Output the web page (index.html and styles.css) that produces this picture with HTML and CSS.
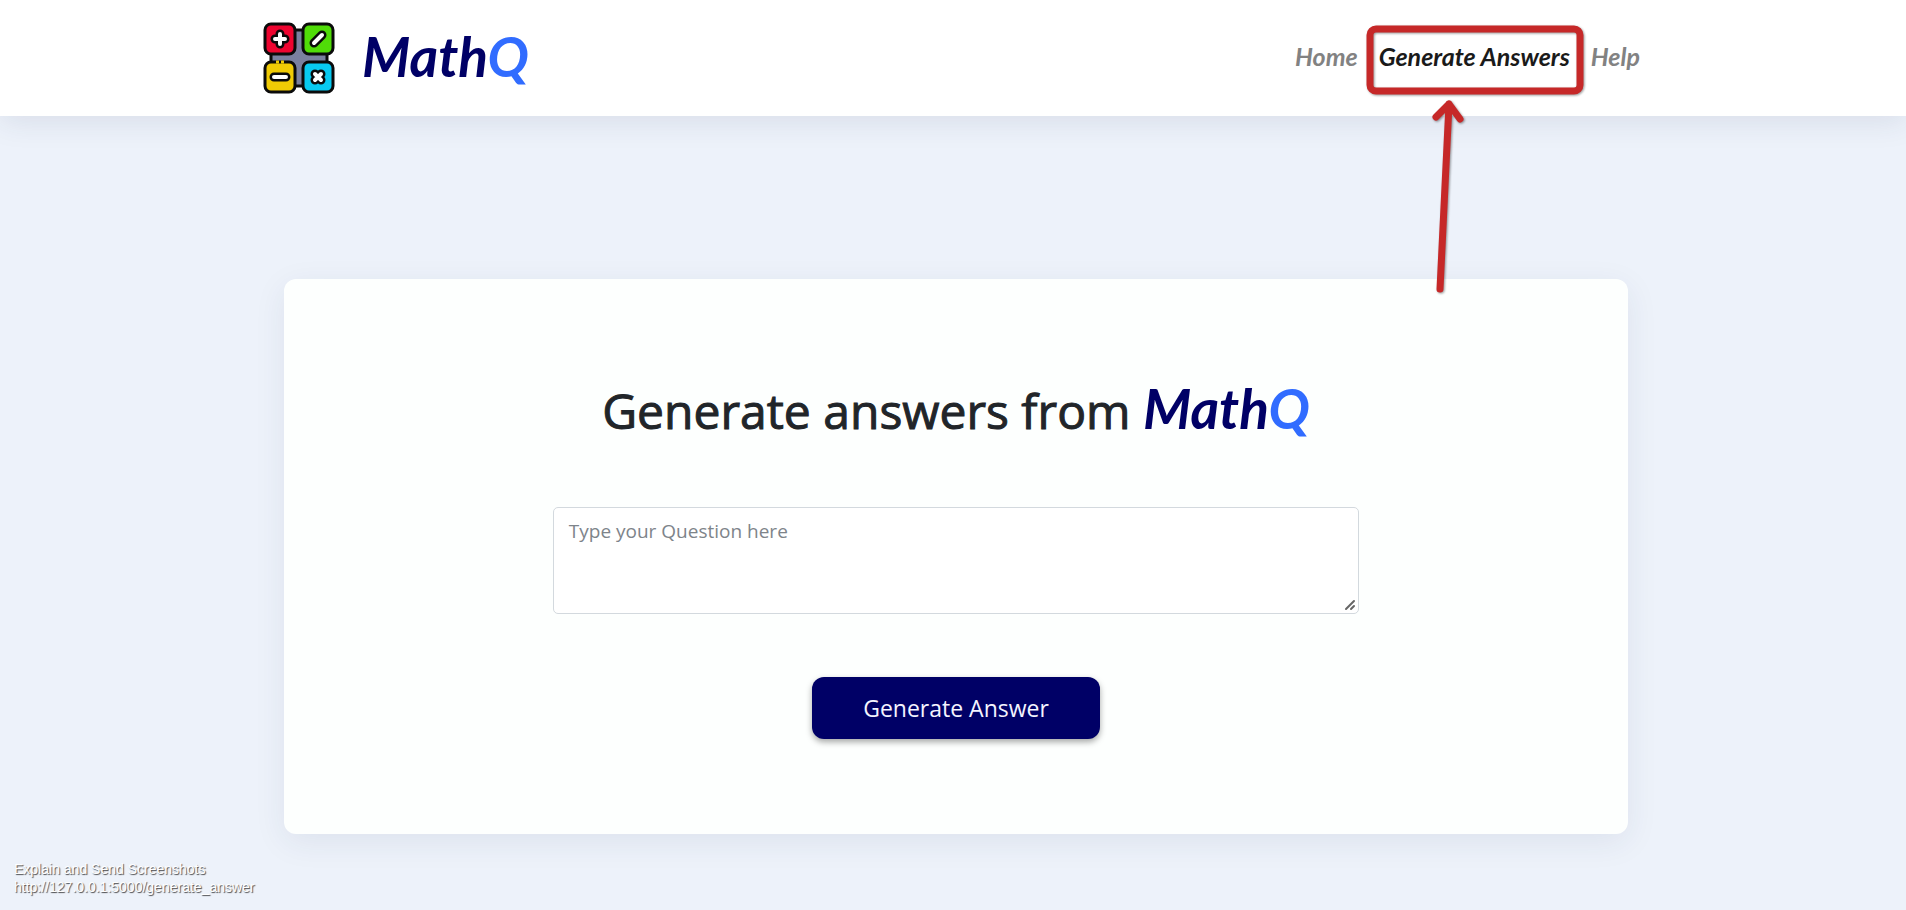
FILE: index.html
```html
<!DOCTYPE html>
<html lang="en">
<head>
  <meta charset="utf-8">
  <meta name="viewport" content="width=device-width, initial-scale=1">
  <title>MathQ</title>
  <link rel="stylesheet" href="styles.css">
</head>
<body>
  <header class="navbar">
    <div class="navbar-inner">
      <a class="brand" href="#">
        <svg class="brand-icon" viewBox="0 0 72 72" aria-hidden="true">
          <rect x="8" y="8" width="56" height="56" rx="4" fill="#7a809f" stroke="#0b0b0b" stroke-width="3"/>
          <g stroke="#0b0b0b" stroke-width="3">
            <rect x="2" y="2" width="30" height="30" rx="6" fill="#ee0530"/>
            <rect x="40" y="2" width="30" height="30" rx="6" fill="#50dc08"/>
            <rect x="2" y="40" width="30" height="30" rx="6" fill="#f0cb05"/>
            <rect x="40" y="40" width="30" height="30" rx="6" fill="#08c9f0"/>
          </g>
          <path d="M13 40h3M18 40h3" stroke="#f0cb05" stroke-width="3"/>
          <g fill="none" stroke-linecap="round" stroke-linejoin="round">
            <path d="M17 12v10M12 17h10M51 21L59 13M11 55h12M52 52l6 6M58 52l-6 6" stroke="#0b0b0b" stroke-width="9"/>
            <path d="M17 12v10M12 17h10M51 21L59 13M11 55h12M52 52l6 6M58 52l-6 6" stroke="#fff" stroke-width="4"/>
          </g>
        </svg>
        <span class="wordmark">Math<span class="wordmark-q">Q</span></span>
      </a>
      <nav class="nav-links">
        <a class="nav-link" href="#">Home</a>
        <a class="nav-link active" href="#">Generate Answers
          <svg class="callout" viewBox="0 0 218 272" fill="none" stroke="#c62828" stroke-width="7" stroke-linecap="round" stroke-linejoin="round" aria-hidden="true">
            <rect x="4" y="4" width="210" height="62" rx="6"/>
            <path d="M74 264L83 79M70 92L83 79L94 94"/>
          </svg>
        </a>
        <a class="nav-link" href="#">Help</a>
      </nav>
    </div>
  </header>
  <main class="page">
    <form class="card">
      <h1 class="card-title">Generate answers from <span class="wordmark">Math<span class="wordmark-q">Q</span></span></h1>
      <div class="question-field">
        <textarea class="question" aria-label="Question" placeholder="Type your Question here"></textarea>
        <svg class="grip" viewBox="0 0 12 12" aria-hidden="true">
          <path d="M2 10L10 2M7 10L10 7" fill="none" stroke="#666" stroke-width="2" stroke-linecap="round"/>
        </svg>
      </div>
      <button class="submit" type="button">Generate Answer</button>
    </form>
  </main>
  <footer class="caption">
    <div>Explain and Send Screenshots</div>
    <div>http://127.0.0.1:5000/generate_answer</div>
  </footer>
</body>
</html>
```
FILE: styles.css
```css
* {
  box-sizing: border-box;
}

body {
  margin: 0;
  min-height: 100vh;
  display: flex;
  flex-direction: column;
  background: #edf2fa;
  color: #212529;
  font-family: "Open Sans", "Noto Sans", sans-serif;
}

.navbar {
  position: relative;
  z-index: 1;
  padding: 22px 24px;
  background: #fff;
  box-shadow: 0 6px 28px rgba(40, 50, 90, 0.1);
}

.navbar-inner {
  display: flex;
  align-items: center;
  justify-content: space-between;
  max-width: 1380px;
  margin: 0 auto;
  padding-right: 3px;
}

.brand {
  display: flex;
  align-items: center;
  gap: 27px;
  font-size: 55px;
  line-height: 72px;
  text-decoration: none;
}

.brand-icon {
  width: 72px;
  height: 72px;
}

.brand .wordmark {
  line-height: 68px;
  padding-bottom: 4px;
}

.wordmark {
  color: #000066;
  font-family: Lato, sans-serif;
  font-style: italic;
  font-weight: 700;
}

.wordmark-q {
  color: #316cff;
}

.nav-links {
  display: flex;
  gap: 21px;
  padding-bottom: 4px;
}

.nav-link {
  position: relative;
  color: #828282;
  font-family: Lato, sans-serif;
  font-size: 25px;
  font-style: italic;
  font-weight: 700;
  line-height: 32px;
  text-decoration: none;
}

.nav-link.active {
  color: #1a1a1a;
}

.callout {
  position: absolute;
  top: -15px;
  left: -13px;
  width: 218px;
  height: 272px;
  filter: drop-shadow(1px 1px 1px rgba(0, 0, 0, 0.4));
  pointer-events: none;
}

.page {
  padding: 163px 24px 26px 30px;
}

.card {
  display: flex;
  flex-direction: column;
  align-items: center;
  max-width: 1344px;
  margin: 0 auto;
  padding: 96px 0 95px;
  background: #fdfffe;
  border-radius: 12px;
  box-shadow: 0 8px 32px rgba(40, 50, 90, 0.08);
}

.card-title {
  margin: 0 0 60px;
  font-size: 48px;
  font-weight: 400;
  line-height: 72px;
  -webkit-text-stroke: 1px #212529;
}

.card-title .wordmark {
  font-size: 55px;
  line-height: 1;
  -webkit-text-stroke: 0;
}

.question-field {
  position: relative;
  display: flex;
  width: 60%;
}

.question {
  flex: 1;
  height: 107px;
  padding: 8px 15px;
  background: #fff;
  border: 1px solid #d3d9de;
  border-radius: 5px;
  font-family: inherit;
  font-size: 19px;
  line-height: 30px;
  resize: none;
}

.question::placeholder {
  color: #7e848a;
}

.grip {
  position: absolute;
  right: 3px;
  bottom: 3px;
  width: 12px;
  height: 12px;
  pointer-events: none;
}

.submit {
  margin-top: 63px;
  padding: 0 51px;
  background: #000066;
  border: 0;
  border-radius: 12px;
  box-shadow: 0 3px 6px rgba(0, 0, 0, 0.35);
  color: #f4f4ff;
  font-family: inherit;
  font-size: 23px;
  line-height: 62px;
}

.caption {
  padding: 0 14px;
  color: #fff;
  font-family: "Liberation Sans", Arial, sans-serif;
  font-size: 14px;
  line-height: 18px;
  text-shadow: 1px 1px 1px rgba(0, 0, 0, 0.7);
}
```
